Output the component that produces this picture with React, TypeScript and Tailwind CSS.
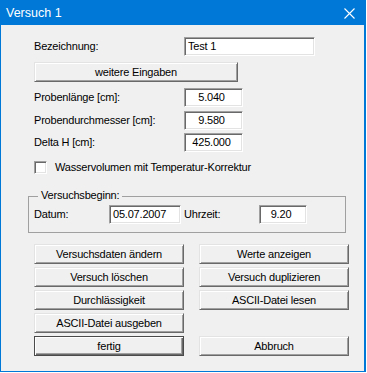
import type { ReactNode } from 'react'

const font = { fontFamily: '"Liberation Sans", Arial, sans-serif' }

function Edit({ value, w, center }: { value: string; w: string; center?: boolean }) {
  return (
    <div
      className={`${w} h-[19px] bg-white border border-t-[#a0a0a0] border-l-[#a0a0a0] border-r-white border-b-white shadow-[inset_1px_1px_0_#696969,inset_-1px_-1px_0_#e3e3e3] flex items-center text-black leading-[13px] ${
        center ? 'justify-center pr-[4px]' : 'pl-[3px]'
      }`}
    >
      {value}
    </div>
  )
}

function Btn({ children, w = 'w-[150px]', isDefault }: { children: ReactNode; w?: string; isDefault?: boolean }) {
  const edge = isDefault
    ? 'border border-[#4a4a4a] shadow-[inset_1px_1px_0_#fff,inset_-1px_-1px_0_#696969,inset_-2px_-2px_0_#a0a0a0]'
    : 'border border-t-[#e3e3e3] border-l-[#e3e3e3] border-r-[#696969] border-b-[#696969] shadow-[inset_1px_1px_0_#fff,inset_-1px_-1px_0_#a0a0a0]'
  return (
    <div className={`${w} h-[20px] bg-[#f0f0f0] ${edge} flex items-center justify-center text-black leading-[13px]`}>
      {children}
    </div>
  )
}

function FieldRow({ label, children }: { label: string; children: ReactNode }) {
  return (
    <div className="flex items-center">
      <span className="w-[150px] text-black">{label}</span>
      {children}
    </div>
  )
}

export default function App() {
  return (
    <div className="w-[367px] h-[373px] bg-white">
      <div className="w-[366px] h-[372px] bg-[#0078d7] pl-[1px] pr-[2px] pb-[1px] flex flex-col">
        {/* Title bar */}
        <div className="h-[25px] flex items-center justify-between pl-[5px] pr-[9px] shrink-0">
          <span className="text-white text-[12.5px] leading-[15px] pt-[1px]" style={font}>
            Versuch 1
          </span>
          <svg width="11" height="11" viewBox="0 0 11 11" className="mt-[1px]">
            <path d="M0.5 0.5 L10.5 10.5 M10.5 0.5 L0.5 10.5" stroke="#fff" strokeWidth="1.1" fill="none" />
          </svg>
        </div>

        {/* Body */}
        <div
          className="flex-1 bg-[#f0f0f0] pl-[27px] pt-[12px] text-[11px] leading-[13px] tracking-[-0.2px] text-black"
          style={font}
        >
          <div className="pl-[6px] flex flex-col">
            <FieldRow label="Bezeichnung:">
              <Edit value="Test 1" w="w-[131px]" />
            </FieldRow>
            <div className="mt-[6px]">
              <Btn w="w-[204px]">weitere Eingaben</Btn>
            </div>
            <div className="mt-[6px] flex flex-col gap-[3.5px]">
              <FieldRow label="Probenlänge [cm]:">
                <Edit value="5.040" w="w-[59px]" center />
              </FieldRow>
              <FieldRow label="Probendurchmesser [cm]:">
                <Edit value="9.580" w="w-[59px]" center />
              </FieldRow>
              <FieldRow label="Delta H [cm]:">
                <Edit value="425.000" w="w-[59px]" center />
              </FieldRow>
            </div>
            <div className="mt-[9px] flex items-center gap-[8px]">
              <div className="w-[13px] h-[13px] bg-white border border-t-[#a0a0a0] border-l-[#a0a0a0] border-r-white border-b-white shadow-[inset_1px_1px_0_#696969,inset_-1px_-1px_0_#e3e3e3]" />
              <span>Wasservolumen mit Temperatur-Korrektur</span>
            </div>
          </div>

          {/* Group box */}
          <div className="relative mt-[22px] w-[318px] border border-[#a0a0a0] pl-[5px] pt-[8px] pb-[8px] flex items-center">
            <span className="absolute -top-[8px] left-[9px] bg-[#f0f0f0] px-[3px]">Versuchsbeginn:</span>
            <span className="w-[75px]">Datum:</span>
            <Edit value="05.07.2007" w="w-[72px]" />
            <span className="ml-[3px] w-[75px]">Uhrzeit:</span>
            <Edit value="9.20" w="w-[48px]" center />
          </div>

          {/* Buttons */}
          <div className="pl-[6px] mt-[11px] grid grid-cols-[150px_150px] gap-x-[15px] gap-y-[3px]">
            <Btn>Versuchsdaten ändern</Btn>
            <Btn>Werte anzeigen</Btn>
            <Btn>Versuch löschen</Btn>
            <Btn>Versuch duplizieren</Btn>
            <Btn>Durchlässigkeit</Btn>
            <Btn>ASCII-Datei lesen</Btn>
            <Btn>ASCII-Datei ausgeben</Btn>
            <div />
            <Btn isDefault>fertig</Btn>
            <Btn>Abbruch</Btn>
          </div>
        </div>
      </div>
    </div>
  )
}
